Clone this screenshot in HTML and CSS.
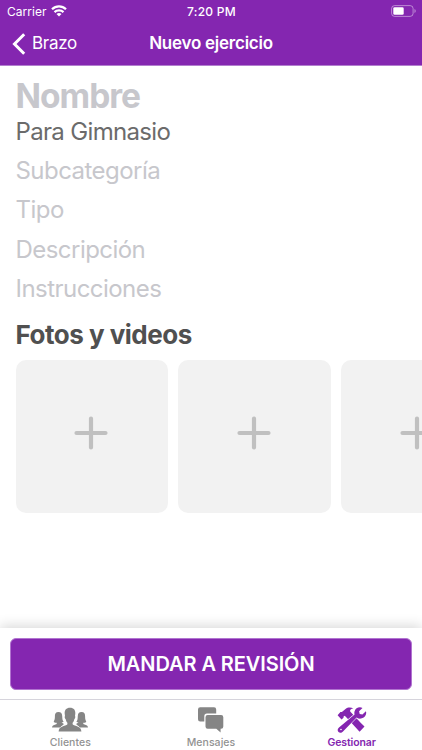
FILE: index.html
```html
<!DOCTYPE html>
<html lang="es">
<head>
<meta charset="utf-8">
<title>Nuevo ejercicio</title>
<link rel="stylesheet" href="styles.css">
</head>
<body>
<div class="screen">
  <header class="header">
    <div class="status">
      <div class="carrier"><span>Carrier</span>
        <svg class="wifi" width="16" height="12" viewBox="0 0 16 12" fill="none" stroke="#fff" stroke-width="2.200"><path d="M1 4.300C5 .4 11 .4 15 4.300M3.500 7.100C6 4.700 10 4.700 12.500 7.100"/><path d="M8 11.500L5.500 9Q8 7 10.500 9Z" fill="#fff" stroke="none"/></svg>
      </div>
      <span class="time">7:20 PM</span>
      <svg class="battery" width="25" height="12" viewBox="0 0 25 12"><rect x=".6" y=".6" width="21.500" height="10.800" rx="3" fill="none" stroke="#fff" stroke-opacity=".45" stroke-width="1"/><rect x="2.300" y="2.200" width="10.400" height="7.600" rx="1.300" fill="#fff"/><path d="M23.500 4v4q1.200-.6 1.200-2T23.500 4Z" fill="#fff" fill-opacity=".5"/></svg>
    </div>
    <nav class="navbar">
      <a class="back"><svg width="14" height="22" viewBox="0 0 14 22" fill="none" stroke="#fff" stroke-width="3"><path d="M12.200 1.300L2.500 11l9.700 9.700"/></svg><span>Brazo</span></a>
      <h1 class="title">Nuevo ejercicio</h1>
      <span></span>
    </nav>
  </header>
  <main class="form">
    <div class="name">Nombre</div>
    <div class="field filled">Para Gimnasio</div>
    <div class="field">Subcategoría</div>
    <div class="field">Tipo</div>
    <div class="field">Descripción</div>
    <div class="field">Instrucciones</div>
    <h2 class="section">Fotos y videos</h2>
    <div class="photos">
      <div class="photo"><svg class="plus" viewBox="0 0 34 34"><path d="M17 2.500v29M2.500 17h29"/></svg></div>
      <div class="photo"><svg class="plus" viewBox="0 0 34 34"><path d="M17 2.500v29M2.500 17h29"/></svg></div>
      <div class="photo"><svg class="plus" viewBox="0 0 34 34"><path d="M17 2.500v29M2.500 17h29"/></svg></div>
    </div>
  </main>
  <div class="action"><button class="submit">MANDAR A REVISIÓN</button></div>
  <footer class="tabs">
    <a class="tab">
      <svg width="36" height="26" viewBox="0 0 36 26" fill="#858585">
        <path d="M6.500 5C3.700 5 2.700 7 2.900 9.500c.1 2.600-.7 4-1.200 5.400 1 .7 2 .8 3 .8v1.300L1.500 18.200Q.2 18.800 0 20.500h8L12 17l-2.500-1.500c.9 0 1.600-.2 2.100-.7C10.200 13.500 10.400 11.500 10.200 9.100 10.100 6.500 9 5 6.500 5Z"/>
        <path d="M29.500 5c2.800 0 3.800 2 3.600 4.500-.1 2.600.7 4 1.200 5.400-1 .7-2 .8-3 .8v1.300l3.200 1.200q1.300.6 1.500 2.300h-8L24 17l2.500-1.500c-.9 0-1.600-.2-2.100-.7 1.400-1.300 1.200-3.300 1.400-5.700C25.900 6.500 27 5 29.500 5Z"/>
        <path stroke="#fff" stroke-width="1" paint-order="stroke" d="M18 .8c-3.800 0-5.500 2.300-5.300 5.900l.3 2.300c-.7.500-.2 2.600.7 3.200.4 1.700 1 2.800 1.700 3.500v1.500c-.7 1-3.500 1.600-5.400 2.500-2.400.9-3 2.400-3.400 4.700h22.800c-.4-2.300-1-3.800-3.400-4.700-1.900-.9-4.700-1.500-5.400-2.500v-1.500c.7-.7 1.300-1.800 1.700-3.500.9-.6 1.400-2.700.7-3.200l.3-2.300C23.500 3.100 21.800.8 18 .8Z"/>
      </svg><span>Clientes</span>
    </a>
    <a class="tab">
      <svg width="26" height="26" viewBox="0 0 26 26" fill="#858585"><path d="M2.200.2h13.800q2.200 0 2.200 2.200v4.200H9Q6.300 6.600 6.300 9.300v5.200H2.200q-2.200 0-2.200-2.200V2.400Q0 .2 2.200.2Z"/><path d="M9.700 8h13.400q2.200 0 2.200 2.200v9.300q0 2.200-2.200 2.200h-.5v3.700l-4.300-3.700H9.700q-2.200 0-2.200-2.200v-9.300Q7.500 8 9.700 8Z"/></svg>
      <span>Mensajes</span>
    </a>
    <a class="tab active">
      <svg width="30" height="26" viewBox="0 0 30 26" fill="#8426b0">
        <path d="M.6 8.200L3.400 5l1.500.1L8.500 1.900C11 0 14 .2 16.400 1.500c-2.500.3-3.800 1.400-3.200 3.100L23.900 16l3.600 3.500-4.900 5.300L9.500 10.500 7.700 8.800 6.600 9.500 6.500 10.700 4.500 12.500Z"/>
        <path d="M25.500.9C22-.6 18.500 1.200 17.600 4.200c-.4 1.200-.3 2.300 0 3.400L2 20.500C.3 21.900.3 23.800 1.500 25c1.200 1.200 3.200 1 4.500-.6L19.600 10.400l1.700 1.100c3.700.6 6.700-1 7.600-3.900.4-1.200.4-2.300 0-3.400l-3.500 3.300-2.700-.5-.6-2.800Z" stroke="#fff" stroke-width="1.300" paint-order="stroke"/>
        <circle cx="4" cy="22.500" r=".8" fill="#fff"/>
      </svg>
      <span>Gestionar</span>
    </a>
  </footer>
</div>
</body>
</html>
```
FILE: styles.css
```css
* { box-sizing: border-box; }
body { margin: 0; font-family: Inter, "Liberation Sans", sans-serif; background: #fff; }
h1, h2 { margin: 0; }
.screen { width: 422px; height: 750px; overflow: hidden; display: flex; flex-direction: column; background: #fff; }
.header { height: 66px; flex: none; background: #8426b0; color: #fff; border-bottom: 1px solid #b27fce; }
.status { height: 22px; display: grid; grid-template-columns: 1fr auto 1fr; align-items: center; padding: 0 6px 0 7px; font-size: 12px; }
.carrier { display: flex; align-items: center; gap: 4px; letter-spacing: .05px; }
.wifi { margin-top: -1px; }
.time { font-weight: 500; letter-spacing: .25px; }
.battery { justify-self: end; margin-top: -1px; }
.navbar { height: 43px; display: grid; grid-template-columns: 1fr auto 1fr; align-items: center; padding: 0 12px; }
.back { display: flex; align-items: center; gap: 6px; font-size: 17px; letter-spacing: -.3px; }
.back span, .title { margin-top: -1px; }
.title { font-size: 17px; font-weight: 600; letter-spacing: -.25px; }
.form { flex: 1; min-height: 0; overflow: hidden; padding: 13px 0 0 15.500px; }
.name { height: 34px; line-height: 34px; font-size: 33.500px; font-weight: 700; color: #c7c7cc; letter-spacing: -1px; }
.field { height: 39.400px; line-height: 39.400px; font-size: 24px; color: #c7c7cc; letter-spacing: -.54px; }
.field.filled { color: #6b6b6b; height: 38px; line-height: 38px; letter-spacing: -.66px; }
.section { height: 51.400px; line-height: 51.400px; font-size: 26px; font-weight: 700; color: #505050; letter-spacing: -.5px; }
.photos { display: flex; gap: 10px; }
.photo { width: 152.800px; height: 153px; flex: none; border-radius: 10px; background: #f2f2f2; display: flex; align-items: center; justify-content: center; }
.plus { width: 34px; height: 34px; stroke: #c0c0c0; stroke-width: 4.200px; stroke-linecap: round; margin-top: -7px; margin-left: -1px; }
.action { height: 71px; flex: none; padding: 10px 10px 0; background: #fff; box-shadow: 0 -2px 12px rgba(0,0,0,.16); }
.submit { display: block; width: 402px; height: 52px; padding: 0; border: 1px solid #b174d0; border-radius: 6px; background: #8426b0; color: #fff; font: 600 20px Inter, sans-serif; letter-spacing: -.08px; }
.tabs { height: 51px; flex: none; display: grid; grid-template-columns: repeat(3, 1fr); border-top: 1px solid #d6d4dc; background: #fff; position: relative; }
.tab { display: flex; flex-direction: column; align-items: center; padding-top: 6.500px; font-size: 10.500px; font-weight: 500; color: #929292; letter-spacing: .05px; }
.tab span { line-height: 13px; margin-top: 3.500px; }
.active { color: #8426b0; font-weight: 600; letter-spacing: -.1px; }
```
